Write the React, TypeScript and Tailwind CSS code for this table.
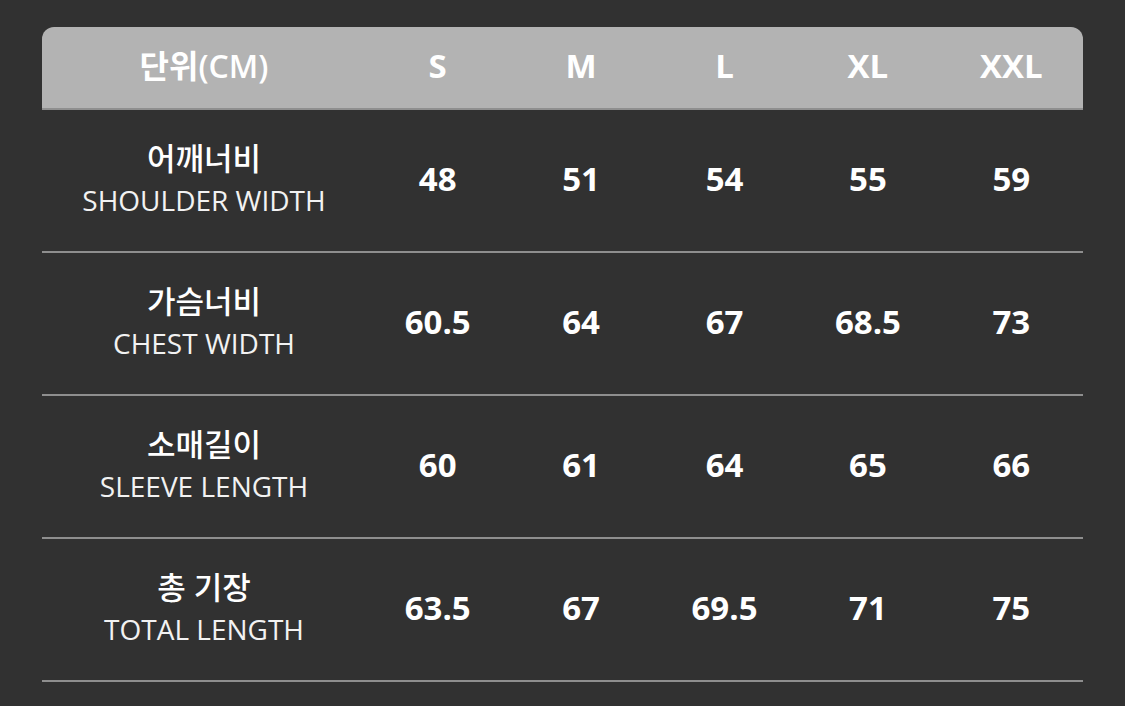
import React from 'react';

const sizes = ['S', 'M', 'L', 'XL', 'XXL'];

const rows = [
  { ko: '어깨너비', en: 'SHOULDER WIDTH', values: ['48', '51', '54', '55', '59'] },
  { ko: '가슴너비', en: 'CHEST WIDTH', values: ['60.5', '64', '67', '68.5', '73'] },
  { ko: '소매길이', en: 'SLEEVE LENGTH', values: ['60', '61', '64', '65', '66'] },
  { ko: '총 기장', en: 'TOTAL LENGTH', values: ['63.5', '67', '69.5', '71', '75'] },
];

const font = { fontFamily: '"Open Sans", "Noto Sans CJK KR", sans-serif' };

export default function App() {
  return (
    <div className="w-[1125px] h-[706px] bg-[#313131] px-[42px] pt-[27px] overflow-hidden" style={font}>
      <div className="w-[1041px]">
        {/* header */}
        <div className="flex h-[83px] items-center bg-[#b3b3b3] rounded-t-[12px] border-b-2 border-[#8f8f8f] text-white">
          <div className="w-[324px] text-center text-[32px] font-semibold leading-none pb-[4px]">단위(CM)</div>
          {sizes.map((s) => (
            <div key={s} className="flex-1 text-center text-[33px] font-bold leading-none pb-[4px]">
              {s}
            </div>
          ))}
        </div>

        {rows.map((r) => (
          <div key={r.en} className="flex h-[143px] items-center border-b-2 border-[#8e8e8e] text-white">
            <div className="w-[324px] flex flex-col items-center pb-[6px]">
              <div className="text-[31px] font-medium leading-[44px]">{r.ko}</div>
              <div className="text-[28px] leading-[40px] text-[#f2f2f2]">{r.en}</div>
            </div>
            {r.values.map((v, i) => (
              <div key={i} className="flex-1 text-center text-[33px] font-bold leading-none pb-[4px]">
                {v}
              </div>
            ))}
          </div>
        ))}
      </div>
    </div>
  );
}
